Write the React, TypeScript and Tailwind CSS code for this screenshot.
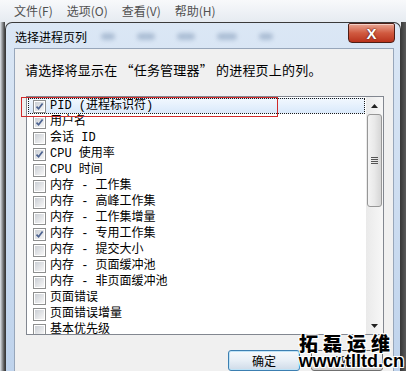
import { useMemo } from "react";

const columns = [
  { label: "PID (进程标识符)", checked: true },
  { label: "用户名", checked: true },
  { label: "会话 ID", checked: false },
  { label: "CPU 使用率", checked: true },
  { label: "CPU 时间", checked: false },
  { label: "内存 - 工作集", checked: false },
  { label: "内存 - 高峰工作集", checked: false },
  { label: "内存 - 工作集增量", checked: false },
  { label: "内存 - 专用工作集", checked: true },
  { label: "内存 - 提交大小", checked: false },
  { label: "内存 - 页面缓冲池", checked: false },
  { label: "内存 - 非页面缓冲池", checked: false },
  { label: "页面错误", checked: false },
  { label: "页面错误增量", checked: false },
  { label: "基本优先级", checked: false },
];

function CheckBox({ checked }: { checked: boolean }) {
  return (
    <div className="w-[13px] h-[13px] shrink-0 border border-[#8e8f8f] bg-white p-[1px]">
      <div className="relative w-full h-full bg-linear-to-br from-[#cbcfd5] to-[#f7f7f7]">
        {checked && (
          <svg viewBox="0 0 9 9" className="absolute inset-0 w-[9px] h-[9px]">
            <path d="M1.5 4.6 L3.6 6.8 L7.6 1.6" fill="none" stroke="#4c6290" strokeWidth="1.7" />
          </svg>
        )}
      </div>
    </div>
  );
}

function Row({ label, checked, selected }: { label: string; checked: boolean; selected?: boolean }) {
  return (
    <div
      className={
        "h-[16px] flex items-center pl-[4px] border " +
        (selected
          ? "border-dotted border-[#1a1a1a] bg-linear-to-b from-[#f1f7fe] to-[#d9e9fb]"
          : "border-transparent")
      }
    >
      <CheckBox checked={checked} />
      <span className="ml-[4px] text-[12px] leading-[16px] text-black whitespace-pre font-['Liberation_Mono','Noto_Sans_CJK_SC',monospace]">
        {label}
      </span>
    </div>
  );
}

function ScrollBar() {
  return (
    <div className="w-[17px] flex flex-col bg-linear-to-r from-[#eaeaea] to-[#f7f7f7]">
      <div className="h-[17px] flex items-center justify-center">
        <svg viewBox="0 0 7 4" className="w-[7px] h-[4px]">
          <path d="M0 4 L3.5 0 L7 4 Z" fill="#222" />
        </svg>
      </div>
      <div className="mx-[1px] h-[93px] rounded-[3px] border border-[#979797] bg-linear-to-r from-[#f4f4f4] via-[#e9e9e9] to-[#d6d6d6] flex flex-col items-center justify-center gap-[1px]">
        <div className="w-[7px] h-[1px] bg-[#555]" />
        <div className="w-[7px] h-[1px] bg-[#555]" />
        <div className="w-[7px] h-[1px] bg-[#555]" />
        <div className="w-[7px] h-[1px] bg-[#555]" />
      </div>
      <div className="flex-1" />
      <div className="h-[17px] flex items-center justify-center">
        <svg viewBox="0 0 7 4" className="w-[7px] h-[4px]">
          <path d="M0 0 L3.5 4 L7 0 Z" fill="#222" />
        </svg>
      </div>
    </div>
  );
}

export default function App() {
  const menus = useMemo(() => ["文件(F)", "选项(O)", "查看(V)", "帮助(H)"], []);

  return (
    <div className="relative w-[406px] h-[371px] overflow-hidden bg-[#e8ecf1] font-['Noto_Sans_CJK_SC',sans-serif]">
      {/* menu bar of the task manager behind */}
      <div className="h-[22px] flex items-center gap-[14px] pl-[14px] text-[12px] text-[#505050] bg-linear-to-b from-[#f8f9fb] to-[#e6ebf1]">
        {menus.map((m) => (
          <span key={m}>{m}</span>
        ))}
      </div>

      <div className="flex h-[349px]">
        <div className="w-[5px] bg-linear-to-r from-[#e3e8ee] to-[#3c3c3c]" />

        {/* dialog */}
        <div className="flex-1 flex flex-col rounded-t-[7px] border border-b-0 border-[#3a3a3a] bg-linear-to-b from-[#dbe7f5] to-[#bfd3ec] pl-[8px] pr-[6px]">
          <div className="h-[25px] flex items-start">
            <span className="pl-[1px] pt-[5px] text-[12px] leading-[17px] text-black">选择进程页列</span>
            <div className="flex-1 flex items-center gap-[22px] pl-[14px] pt-[10px] opacity-60">
              <div className="w-[14px] h-[7px] rounded-full bg-[#8ea4c0] blur-[2px]" />
              <div className="w-[18px] h-[7px] rounded-full bg-[#8ea4c0] blur-[2px]" />
              <div className="w-[18px] h-[7px] rounded-full bg-[#8ea4c0] blur-[2px]" />
              <div className="w-[20px] h-[7px] rounded-full bg-[#8ea4c0] blur-[2px]" />
              <div className="w-[14px] h-[7px] rounded-full bg-[#8ea4c0] blur-[2px]" />
            </div>
            <div className="mr-[-1px] w-[47px] h-[20px] rounded-b-[4px] rounded-t-[2px] border border-[#4e1e16] bg-linear-to-b from-[#e9a593] via-[#d05a40] to-[#b9321c] flex items-center justify-center shadow-[inset_0_1px_0_rgba(255,255,255,0.5)]">
              <span className="text-[15px] leading-none font-bold text-white font-['Liberation_Sans',sans-serif] [text-shadow:0_0_2px_#5a1a10,0_0_1px_#5a1a10]">
                X
              </span>
            </div>
          </div>

          {/* body */}
          <div className="flex-1 border border-b-0 border-[#97a6ba] bg-[#f0f0f0]">
            <div className="pl-[10px] pt-[13px] h-[30px] text-[13px] leading-[16px] text-black tracking-[0.2px] whitespace-pre">
              请选择将显示在 “任务管理器” 的进程页上的列。
            </div>

            <div className="ml-[11px] mt-[17px] w-[358px] h-[239px] border border-[#828790] bg-white flex overflow-hidden">
              <div className="flex-1 pt-[1px] px-[1px]">
                {columns.map((c, i) => (
                  <Row key={c.label} label={c.label} checked={c.checked} selected={i === 0} />
                ))}
              </div>
              <ScrollBar />
            </div>

            <div className="mt-[15px] flex justify-end gap-[11px] pr-[10px]">
              <button className="w-[72px] h-[21px] rounded-[3px] border border-[#3c7fb1] bg-linear-to-b from-[#f6f9fc] via-[#e8eff6] to-[#cfdbe8] text-[12px] text-black shadow-[inset_0_0_0_1px_#bfe3f7]">
                确定
              </button>
              <button className="w-[72px] h-[21px] rounded-[3px] border border-[#707070] bg-linear-to-b from-[#f2f2f2] via-[#ebebeb] to-[#cfcfcf] text-[12px] text-black">
                取消
              </button>
            </div>
          </div>
        </div>

        <div className="w-[5px] bg-linear-to-r from-[#3c3c3c] to-[#5a5a5a]" />
      </div>

      {/* red annotation box */}
      <div className="absolute left-[21px] top-[97px] w-[257px] h-[20px] border border-[#cf2a2a]" />

      {/* watermark */}
      <div className="absolute right-[2px] bottom-[0px] flex flex-col items-end text-black">
        <span className="mr-[9px] text-[19px] leading-[18px] font-black tracking-[5px] [text-shadow:1px_1px_0_#fff,-1px_-1px_0_#fff,1px_-1px_0_#fff,-1px_1px_0_#fff]">
          拓磊运维
        </span>
        <span className="text-[18px] leading-[19px] font-bold font-['Liberation_Sans',sans-serif] [text-shadow:1px_1px_0_#fff,-1px_-1px_0_#fff,1px_-1px_0_#fff,-1px_1px_0_#fff]">
          www.tlltd.cn
        </span>
      </div>
    </div>
  );
}
